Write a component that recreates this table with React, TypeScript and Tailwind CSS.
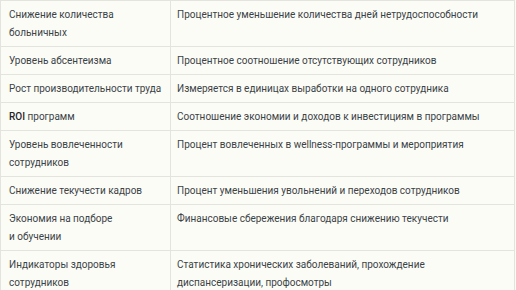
const rows: [string[], string[]][] = [
  [["Снижение количества", "больничных"], ["Процентное уменьшение количества дней нетрудоспособности"]],
  [["Уровень абсентеизма"], ["Процентное соотношение отсутствующих сотрудников"]],
  [["Рост производительности труда"], ["Измеряется в единицах выработки на одного сотрудника"]],
  [["ROI программ"], ["Соотношение экономии и доходов к инвестициям в программы"]],
  [["Уровень вовлеченности", "сотрудников"], ["Процент вовлеченных в wellness-программы и мероприятия"]],
  [["Снижение текучести кадров"], ["Процент уменьшения увольнений и переходов сотрудников"]],
  [["Экономия на подборе", "и обучении"], ["Финансовые сбережения благодаря снижению текучести"]],
  [["Индикаторы здоровья", "сотрудников"], ["Статистика хронических заболеваний, прохождение", "диспансеризации, профосмотры"]],
];

function Line({ text }: { text: string }) {
  // "ROI" в оригинале чуть темнее и плотнее
  if (text.startsWith("ROI ")) {
    return (
      <div className="whitespace-nowrap">
        <span className="text-[#1f2527] font-medium">ROI</span>
        {text.slice(3)}
      </div>
    );
  }
  return <div className="whitespace-nowrap">{text}</div>;
}

export default function App() {
  return (
    <div className="w-[516px] h-[290px] overflow-hidden bg-[#fcfcf7]">
      <table
        className="w-[515px] border-collapse text-[10px] leading-[18px] text-[#3b4346] table-fixed"
        style={{ fontFamily: 'Roboto, "Liberation Sans", Arial, sans-serif' }}
      >
        <colgroup>
          <col className="w-[170px]" />
          <col />
        </colgroup>
        <tbody>
          {rows.map(([left, right], i) => (
            <tr key={i}>
              <td className="border border-[#e4e4de] px-[8px] py-[4.5px] align-top">
                {left.map((l, j) => (
                  <Line key={j} text={l} />
                ))}
              </td>
              <td className="border border-[#e4e4de] px-[6px] py-[4.5px] align-top">
                {right.map((l, j) => (
                  <Line key={j} text={l} />
                ))}
              </td>
            </tr>
          ))}
        </tbody>
      </table>
    </div>
  );
}
